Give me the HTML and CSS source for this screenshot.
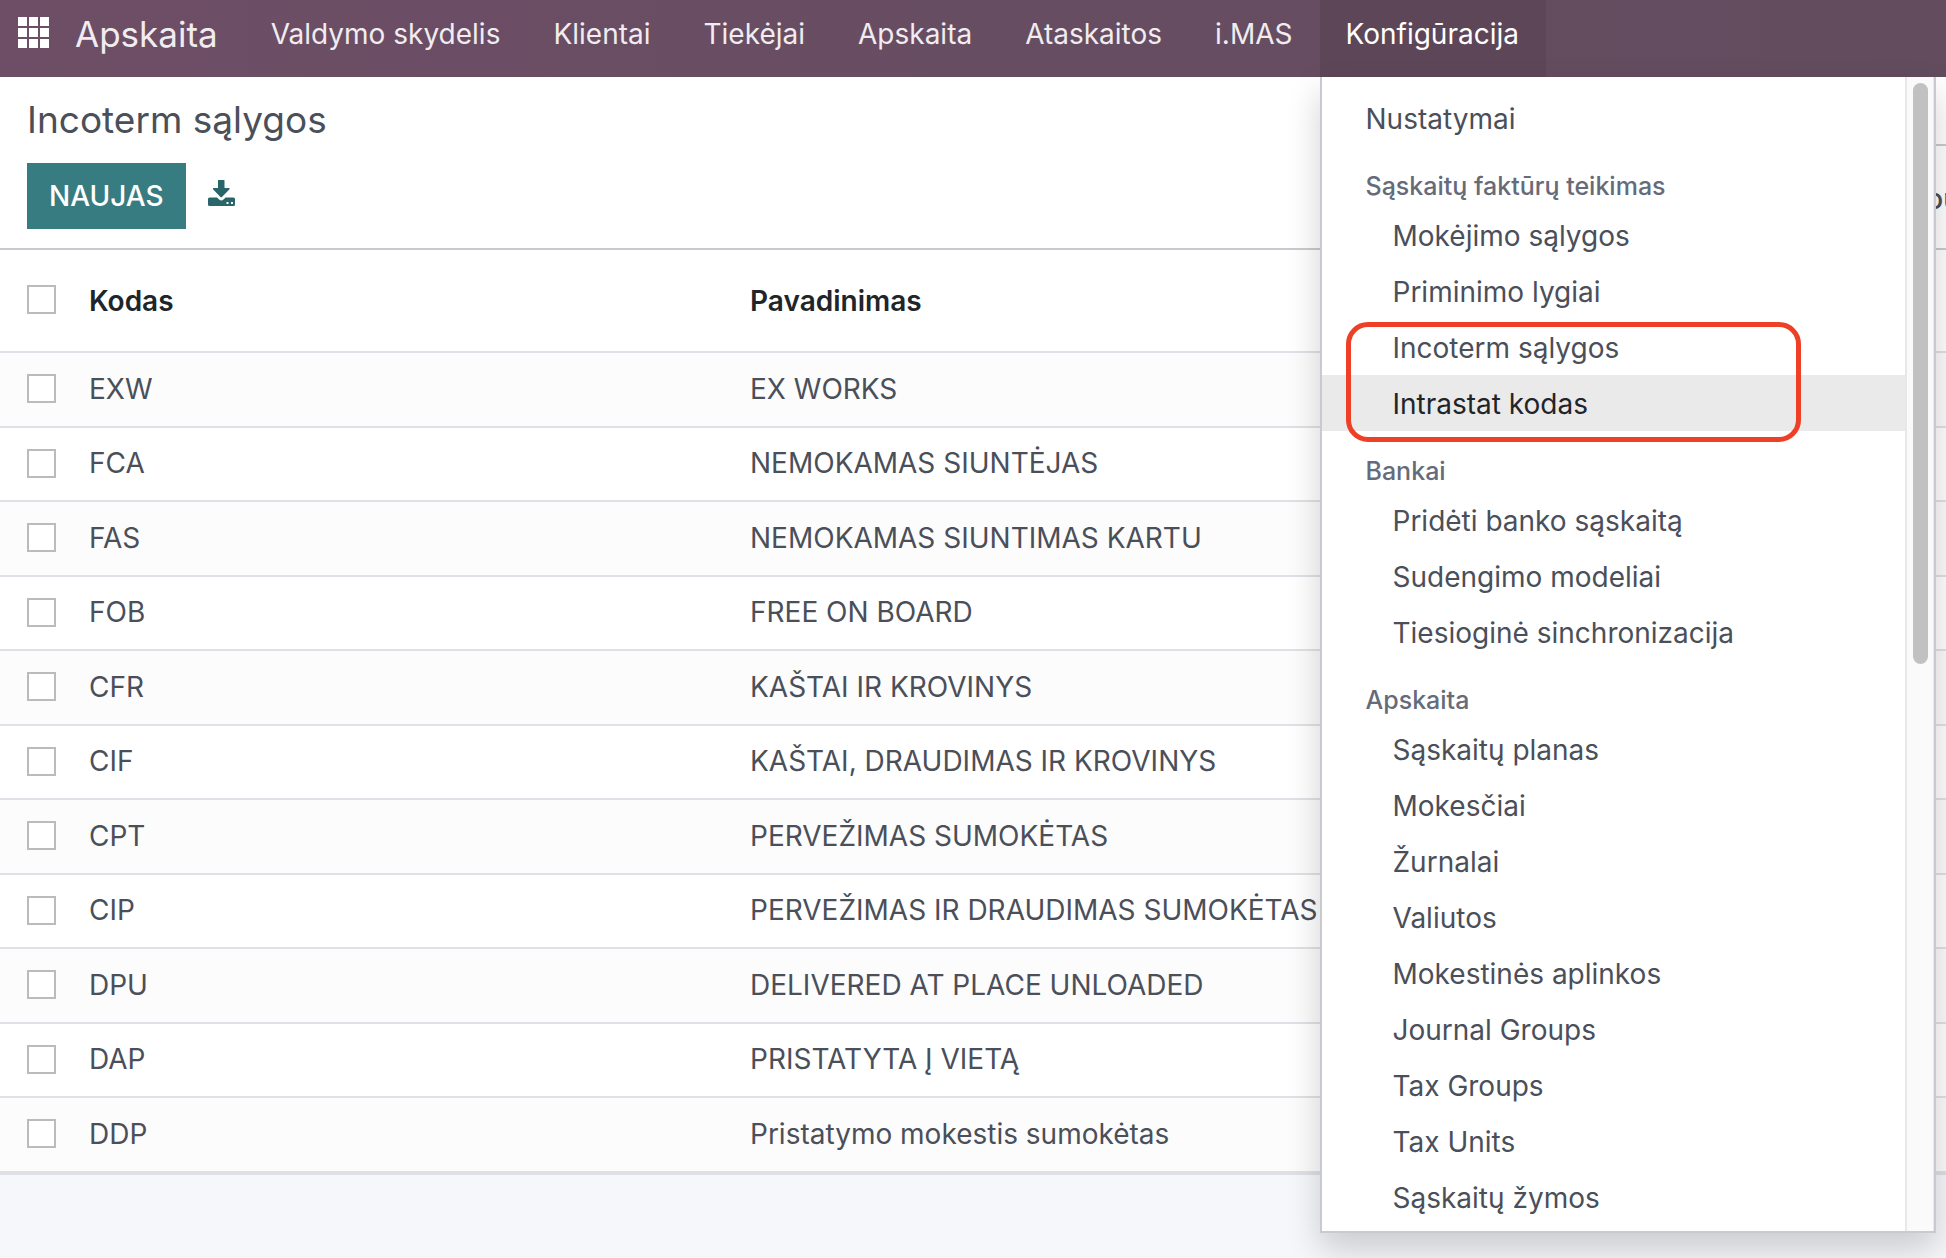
FILE: index.html
```html
<!DOCTYPE html>
<html lang="lt">
<head>
<meta charset="utf-8">
<title>Incoterm sąlygos</title>
<link rel="stylesheet" href="styles.css">
</head>
<body>
<nav class="navbar">
  <button class="apps" type="button" aria-label="Apps">
    <svg width="31" height="31" viewBox="0 0 31 31" fill="#fff"><path d="M0 0h9v9H0zM11 0h9v9h-9zM22 0h9v9h-9zM0 11h9v9H0zM11 11h9v9h-9zM22 11h9v9h-9zM0 22h9v9H0zM11 22h9v9h-9zM22 22h9v9h-9z"/></svg>
  </button>
  <a class="brand" href="#">Apskaita</a>
  <a class="nav-item" href="#">Valdymo skydelis</a>
  <a class="nav-item" href="#">Klientai</a>
  <a class="nav-item" href="#">Tiekėjai</a>
  <a class="nav-item" href="#">Apskaita</a>
  <a class="nav-item" href="#">Ataskaitos</a>
  <a class="nav-item" href="#">i.MAS</a>
  <div class="dropdown">
    <a class="nav-item active" href="#">Konfigūracija</a>
    <div class="menu">
      <div class="menu-list">
        <a class="top" href="#">Nustatymai</a>
        <h2>Sąskaitų faktūrų teikimas</h2>
        <a href="#">Mokėjimo sąlygos</a>
        <a href="#">Priminimo lygiai</a>
        <div class="marked">
          <a href="#">Incoterm sąlygos</a>
          <a class="hover" href="#">Intrastat kodas</a>
          <span class="mark"></span>
        </div>
        <h2>Bankai</h2>
        <a href="#">Pridėti banko sąskaitą</a>
        <a href="#">Sudengimo modeliai</a>
        <a href="#">Tiesioginė sinchronizacija</a>
        <h2>Apskaita</h2>
        <a href="#">Sąskaitų planas</a>
        <a href="#">Mokesčiai</a>
        <a href="#">Žurnalai</a>
        <a href="#">Valiutos</a>
        <a href="#">Mokestinės aplinkos</a>
        <a href="#">Journal Groups</a>
        <a href="#">Tax Groups</a>
        <a href="#">Tax Units</a>
        <a href="#">Sąskaitų žymos</a>
      </div>
      <div class="scrollbar"><div class="thumb"></div></div>
    </div>
  </div>
</nav>
<header class="control-panel">
  <div class="panel-left">
    <h1>Incoterm sąlygos</h1>
    <div class="actions">
      <button class="btn-new" type="button">NAUJAS</button>
      <button class="btn-export" type="button" aria-label="Export">
        <svg width="27" height="26" viewBox="0 0 27 26" fill="#28666a"><path d="M10.500 0h5.500q.5 0 .5.500V8h4.500q1.200.2.500 1.200L14.200 16.800q-1 1-2 0L5 9.200Q4.400 8.200 5.500 8H10V.5q0-.5.5-.5z"/><path fill-rule="evenodd" d="M1.500 17.500H9l2.400 2.300q1.900 1.600 3.800 0l2.400-2.300h7.900q1.500 0 1.500 1.500v5.500q0 1.500-1.500 1.500h-24Q0 26 0 24.500V19q0-1.500 1.500-1.500zM18.500 22v2h2v-2zM23 22v2h2v-2z"/></svg>
      </button>
    </div>
  </div>
  <div class="panel-right">
    <input class="search" type="text" aria-label="Search">
    <button class="filter" type="button">ou</button>
  </div>
</header>
<main>
<table>
  <thead>
    <tr><th class="check"><input type="checkbox" aria-label="Select all"></th><th class="code">Kodas</th><th>Pavadinimas</th></tr>
  </thead>
  <tbody>
    <tr><td class="check"><input type="checkbox" aria-label="EXW"></td><td>EXW</td><td>EX WORKS</td></tr>
    <tr><td class="check"><input type="checkbox" aria-label="FCA"></td><td>FCA</td><td>NEMOKAMAS SIUNTĖJAS</td></tr>
    <tr><td class="check"><input type="checkbox" aria-label="FAS"></td><td>FAS</td><td>NEMOKAMAS SIUNTIMAS KARTU</td></tr>
    <tr><td class="check"><input type="checkbox" aria-label="FOB"></td><td>FOB</td><td>FREE ON BOARD</td></tr>
    <tr><td class="check"><input type="checkbox" aria-label="CFR"></td><td>CFR</td><td>KAŠTAI IR KROVINYS</td></tr>
    <tr><td class="check"><input type="checkbox" aria-label="CIF"></td><td>CIF</td><td>KAŠTAI, DRAUDIMAS IR KROVINYS</td></tr>
    <tr><td class="check"><input type="checkbox" aria-label="CPT"></td><td>CPT</td><td>PERVEŽIMAS SUMOKĖTAS</td></tr>
    <tr><td class="check"><input type="checkbox" aria-label="CIP"></td><td>CIP</td><td>PERVEŽIMAS IR DRAUDIMAS SUMOKĖTAS</td></tr>
    <tr><td class="check"><input type="checkbox" aria-label="DPU"></td><td>DPU</td><td>DELIVERED AT PLACE UNLOADED</td></tr>
    <tr><td class="check"><input type="checkbox" aria-label="DAP"></td><td>DAP</td><td>PRISTATYTA Į VIETĄ</td></tr>
    <tr><td class="check"><input type="checkbox" aria-label="DDP"></td><td>DDP</td><td>Pristatymo mokestis sumokėtas</td></tr>
  </tbody>
</table>
</main>
</body>
</html>
```
FILE: styles.css
```css
* { box-sizing: border-box; }
body {
  margin: 0;
  min-height: 100vh;
  overflow: hidden;
  background: #f5f7fb;
  color: #4a4f59;
  font: 28px/34px Inter, "Liberation Sans", sans-serif;
}
a { color: inherit; text-decoration: none; }
button { font: inherit; color: inherit; border: 0; background: none; padding: 0; }

.navbar {
  display: flex;
  height: 77px;
  background: linear-gradient(to right, #6d4e66, #624c5e);
  color: #f0ecf0;
  white-space: nowrap;
}
.apps { display: flex; padding: 17px 26px 0 18px; }
.brand { padding-right: 27px; font-size: 35px; line-height: 68px; }
.nav-item { display: block; height: 77px; padding: 0 27px 0 26px; line-height: 68px; }
.nav-item.active { background: #5d4658; color: #fff; }

.dropdown { position: relative; }
.menu {
  position: absolute;
  z-index: 2;
  top: 77px;
  left: 0;
  display: flex;
  width: 616px;
  background: #fff;
  border: 2px solid #c9cacf;
  border-top: 0;
  box-shadow: 0 16px 32px rgba(0, 0, 0, .18);
  color: #4a4f59;
}
.menu-list { flex: 1; padding: 13px 0 6px; }
.menu-list a { display: block; padding: 12px 0 10px 71px; }
.menu-list .top { padding-left: 44px; }
.menu-list h2 {
  margin: 0;
  padding: 24px 0 5px 44px;
  color: #666b7a;
  font-size: 25px;
  font-weight: 500;
  line-height: 32px;
}
.menu-list .hover { background: #eaeaea; color: #212529; }
.marked { position: relative; }
.mark {
  position: absolute;
  top: 3px;
  left: 24px;
  width: 455px;
  height: 120px;
  border: 5px solid #ee4026;
  border-radius: 22px;
}
.scrollbar {
  width: 29px;
  padding: 6px 5px 0 6px;
  background: #fafafa;
  border: solid #e8e8e8;
  border-width: 0 1px 0 2px;
}
.thumb { height: 581px; border-radius: 8px; background: #c1c1c1; }

.control-panel {
  display: flex;
  background: #fff;
  border-bottom: 2px solid #c9cacf;
}
.panel-left { flex: 1; padding: 19px 27px; }
h1 { margin: 0 0 19px; font-size: 37px; font-weight: 400; line-height: 48px; }
.actions { display: flex; align-items: center; gap: 22px; }
.btn-new {
  height: 66px;
  padding: 0 22px;
  background: #377c80;
  color: #fff;
  font-weight: 500;
}
.btn-export { display: flex; padding-bottom: 6px; }
.panel-right { flex: 0 0 31%; overflow: hidden; }
.search {
  display: block;
  width: 100%;
  height: 69px;
  border: 0;
  border-bottom: 2px solid #c9cacf;
  font: inherit;
}
.filter { display: block; margin: 36px -14px 0 auto; font-weight: 500; }

table { width: 100%; border-collapse: separate; border-spacing: 0; table-layout: fixed; background: #fff; border-bottom: 2px solid #dfe0e3; }
th, td { padding: 0 0 2px; height: 75px; text-align: left; border-bottom: 2px solid #e0e0e6; vertical-align: middle; }
th { height: 103px; padding-bottom: 0; color: #212529; font-weight: 600; }
th.check { padding-bottom: 2px; }
tbody tr:nth-child(odd) { background: #fcfcfc; }
tbody tr:nth-child(even) td { height: 74px; }
.check { width: 89px; padding-left: 27px; }
.code { width: 661px; }
.check input {
  display: block;
  appearance: none;
  width: 29px;
  height: 29px;
  margin: 0;
  background: #fff;
  border: 2px solid #bbb;
}
```
